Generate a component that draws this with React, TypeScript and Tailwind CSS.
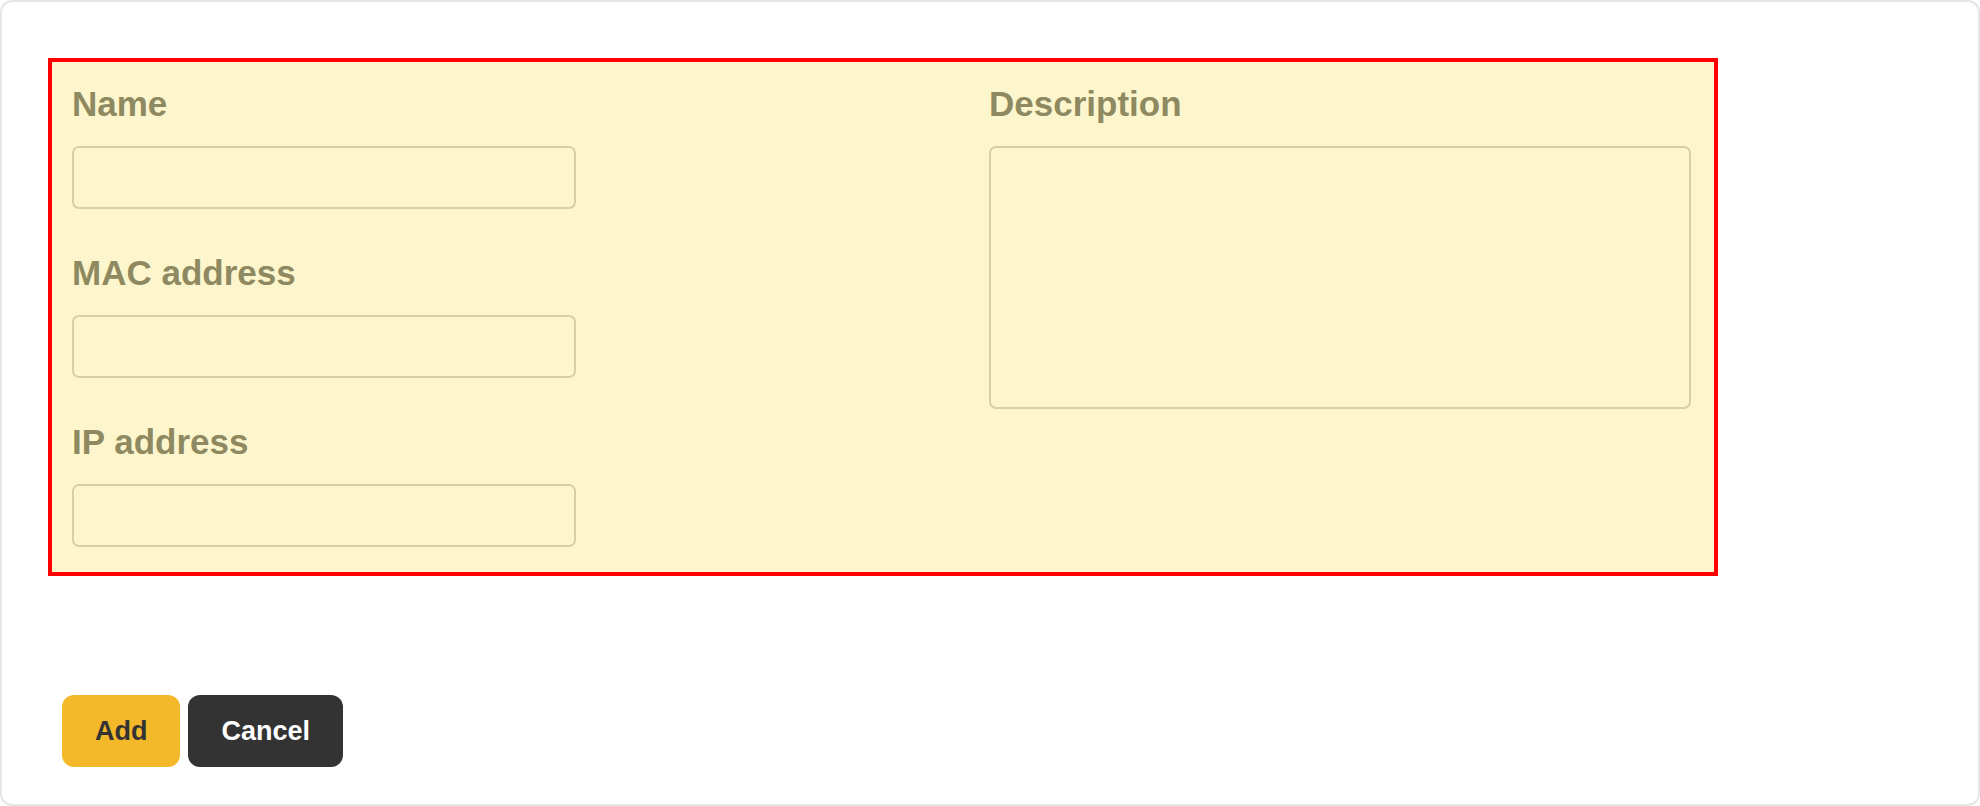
import React from 'react';

const font = { fontFamily: '"Liberation Sans", Arial, sans-serif' };

const Field = ({ label, last }: { label: string; last?: boolean }) => (
    <div className={last ? '' : 'mb-[44px]'}>
        <label className="block text-[35px] leading-[40px] font-bold text-[#8e8960] mb-[22px]">{label}</label>
        <input
            type="text"
            className="block w-[504px] h-[63px] rounded-[7px] border-2 border-[#d8d0a4] bg-transparent outline-none"
        />
    </div>
);

const App = () => {
    return (
        <div style={font} className="w-full h-[806px] bg-white">
            <div className="h-full border-2 border-[#e6e6e6] rounded-[12px] pl-[46px] pt-[56px]">
                <div className="w-[1670px] h-[518px] border-4 border-[#ff0000] bg-[#fdf6cd] pl-[20px] pr-[23px] pt-[22px] flex">
                    <div className="w-[917px] shrink-0">
                        <Field label="Name" />
                        <Field label="MAC address" />
                        <Field label="IP address" last />
                    </div>
                    <div className="flex-1">
                        <label className="block text-[35px] leading-[40px] font-bold text-[#8e8960] mb-[22px]">Description</label>
                        <textarea className="block w-full h-[263px] rounded-[7px] border-2 border-[#d8d0a4] bg-transparent outline-none resize-none" />
                    </div>
                </div>

                <div className="flex gap-[8px] ml-[14px] mt-[119px]">
                    <button className="h-[72px] px-[33px] rounded-[12px] bg-[#f4b92b] text-[#333333] text-[27px] font-bold">
                        Add
                    </button>
                    <button className="h-[72px] px-[33px] rounded-[12px] bg-[#333333] text-white text-[27px] font-bold">
                        Cancel
                    </button>
                </div>
            </div>
        </div>
    );
};

export default App;
